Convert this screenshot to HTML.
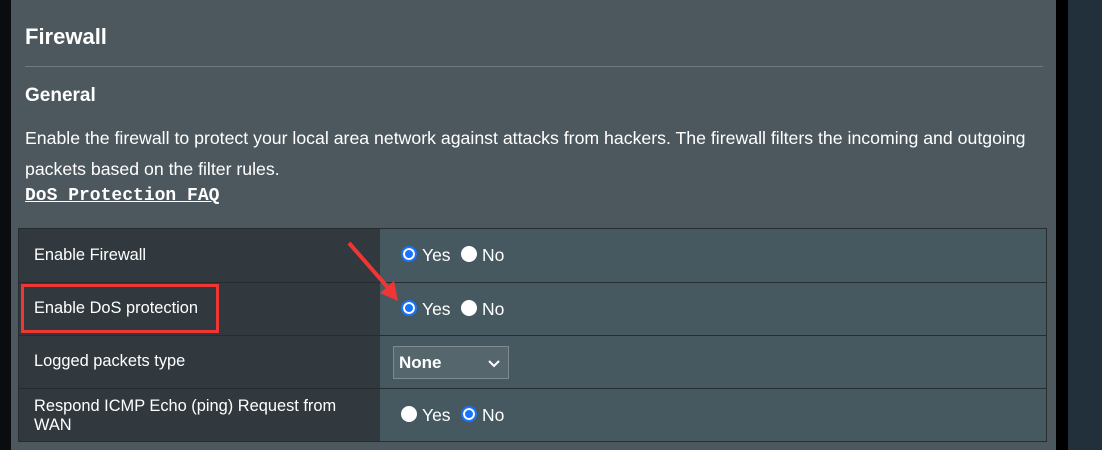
<!DOCTYPE html>
<html><head><style>
body{margin:0;width:1102px;height:450px;overflow:hidden;background:#21303a;font-family:"Liberation Sans",Arial,sans-serif;position:relative}
.l{position:absolute;left:0;top:0;width:11px;height:450px;background:#0a0d10}
.p{position:absolute;left:11px;top:0;width:1045px;height:450px;background:#4d585e;color:#fff}
.b{position:absolute;left:1056px;top:0;width:12px;height:450px;background:#000}
.t{position:absolute;white-space:nowrap}
.row{position:absolute;left:7px;width:1029px;border:1px solid #272c2f;box-sizing:border-box}
.lab{position:absolute;left:0;top:0;bottom:0;width:361px;background:#31393e;border-right:1px solid #272c2f;font-size:16.4px}
.val{position:absolute;left:361px;right:0;top:0;bottom:0;background:#475960;font-size:17.5px}
.r{position:absolute;width:16px;height:16px;border-radius:50%;background:#fff;box-sizing:border-box;top:1px}
.on{border:2px solid #1a73ff;background:#1a73ff;box-shadow:inset 0 0 0 2px #fff}
</style></head><body>
<div class="l"></div>
<div class="p">
<div class="t" style="left:14px;top:24px;font-size:22px;font-weight:bold">Firewall</div>
<div style="position:absolute;left:14px;top:66px;width:1018px;height:1px;background:#6f7a80"></div>
<div class="t" style="left:14px;top:85px;font-size:19px;font-weight:bold">General</div>
<div class="t" style="left:14px;top:123px;font-size:17.7px;line-height:31px">Enable the firewall to protect your local area network against attacks from hackers. The firewall filters the incoming and outgoing<br>packets based on the filter rules.</div>
<div class="t" style="left:14px;top:186px;font-size:18px;font-weight:bold;font-family:'Liberation Mono',monospace;text-decoration:underline">DoS Protection FAQ</div>
<div class="row" style="top:228px;height:55px"><div class="lab"><span class="t" style="left:15px;top:17px">Enable Firewall</span></div><div class="val"><span class="t" style="left:21px;top:16px;width:120px;height:20px"><span class="r on" style="left:0"></span><span class="t" style="left:21px">Yes</span><span class="r" style="left:60px"></span><span class="t" style="left:81px">No</span></span></div></div>
<div class="row" style="top:282px;height:54px"><div class="lab"><span class="t" style="left:15px;top:16px">Enable DoS protection</span></div><div class="val"><span class="t" style="left:21px;top:16px;width:120px;height:20px"><span class="r on" style="left:0"></span><span class="t" style="left:21px">Yes</span><span class="r" style="left:60px"></span><span class="t" style="left:81px">No</span></span></div></div>
<div class="row" style="top:335px;height:54px"><div class="lab"><span class="t" style="left:15px;top:16px">Logged packets type</span></div><div class="val"><div style="position:absolute;left:13px;top:10px;width:116px;height:33px;box-sizing:border-box;border:1px solid #7d8a90;background:#55666d;font-weight:bold;font-size:17px"><span class="t" style="left:5px;top:6px">None</span><svg style="position:absolute;right:8px;top:13px" width="12" height="8"><path d="M1 1L6 6L11 1" stroke="#fff" stroke-width="2" fill="none"/></svg></div></div></div>
<div class="row" style="top:388px;height:54px"><div class="lab"><span class="t" style="left:15px;top:8px;line-height:19px">Respond ICMP Echo (ping) Request from<br>WAN</span></div><div class="val"><span class="t" style="left:21px;top:16px;width:120px;height:20px"><span class="r" style="left:0"></span><span class="t" style="left:21px">Yes</span><span class="r on" style="left:60px"></span><span class="t" style="left:81px">No</span></span></div></div>
</div>
<div class="b"></div>
<div style="position:absolute;left:21px;top:284px;width:198px;height:49px;border:3px solid #f03535;box-sizing:border-box"></div>
<svg style="position:absolute;left:340px;top:235px" width="70" height="75"><line x1="9" y1="8" x2="50" y2="55" stroke="#f03535" stroke-width="4"/><path d="M58 66L40 58L54 46Z" fill="#f03535"/></svg>
</body></html>
